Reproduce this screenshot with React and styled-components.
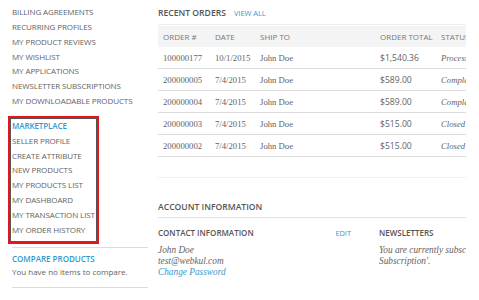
import React from "react";
import styled, { createGlobalStyle } from "styled-components";

const Global = createGlobalStyle`
  html, body { margin: 0; padding: 0; background: #fff; }
  body { width: 479px; height: 300px; overflow: hidden; }
`;

const SANS = `"Open Sans", "Liberation Sans", sans-serif`;
const SERIF = `"Liberation Serif", "DejaVu Serif", serif`;
const BLUE = "#3399cc";
const GRAY = "#636363";

const Page = styled.div`
  display: flex;
  align-items: flex-start;
`;

const Sidebar = styled.aside`
  width: 136px;
  margin-left: 12px;
  padding-top: 5px;
  flex: none;
`;

const NavList = styled.ul`
  list-style: none;
  margin: 0;
  padding: 0;
`;

const NavItem = styled.li`
  font-family: ${SANS};
  font-size: 8px;
  line-height: 14.85px;
  height: 14.85px;
  text-transform: uppercase;
  white-space: nowrap;
  letter-spacing: -0.1px;
  color: ${(p) => (p.$active ? BLUE : GRAY)};
  font-weight: ${(p) => (p.$active ? 600 : 400)};
`;

const Highlight = styled.div`
  margin: 9px 0 0 -2px;
  width: 84px;
  padding: 0 0 3px 1px;
  border: 1px solid #555;
  outline: 2px solid #e8141c;
`;

const Block = styled.div`
  border-top: 1px solid #dcdcdc;
  border-bottom: 1px solid #dcdcdc;
  margin-top: 5px;
  padding: 5px 0 8px;
`;

const BlockTitle = styled.div`
  font-family: ${SANS};
  font-size: 8px;
  font-weight: 600;
  color: ${BLUE};
  text-transform: uppercase;
  line-height: 12px;
`;

const BlockText = styled.div`
  font-family: ${SANS};
  font-size: 8px;
  color: ${GRAY};
  line-height: 14px;
`;

const Main = styled.main`
  margin-left: 10px;
  width: 308px;
  overflow: hidden;
  flex: none;
  padding-top: 7px;
`;

const SectionHead = styled.div`
  display: flex;
  align-items: baseline;
  gap: 8px;
  border-bottom: 1px solid #ededed;
  padding-bottom: 5px;
`;

const SectionTitle = styled.h2`
  margin: 0;
  font-family: ${SANS};
  font-size: 8.6px;
  font-weight: 600;
  color: #555;
  text-transform: uppercase;
  line-height: 12px;
  white-space: nowrap;
`;

const SmallLink = styled.a`
  font-family: ${SANS};
  font-size: 7.4px;
  color: ${BLUE};
  text-transform: uppercase;
  text-decoration: none;
`;

const Table = styled.table`
  margin-top: 1px;
  border-collapse: collapse;
  width: 330px;
  table-layout: fixed;
`;

const Th = styled.th`
  box-sizing: border-box;
  background: #f4f4f4;
  height: 21px;
  padding: 0 0 1px 5px;
  text-align: left;
  font-family: ${SANS};
  font-size: 8px;
  font-weight: 400;
  color: #777;
  text-transform: uppercase;
  white-space: nowrap;
  overflow: hidden;
  width: ${(p) => p.$w}px;
`;

const Td = styled.td`
  height: 21px;
  padding: 0 0 0 5px;
  border-bottom: 1px solid #dcdcdc;
  font-family: ${(p) => (p.$sans ? SANS : SERIF)};
  font-size: ${(p) => (p.$sans ? "8.6px" : "8.7px")};
  font-style: ${(p) => (p.$italic ? "italic" : "normal")};
  color: ${GRAY};
  white-space: nowrap;
  overflow: hidden;
`;

const Spacer = styled.div`
  height: 20px;
  border-bottom: 1px solid #f3f3f3;
`;

const Account = styled.section`
  margin-top: 23px;
`;

const AccountHead = styled.div`
  border-bottom: 1px solid #e3e3e3;
  padding-bottom: 4px;
`;

const Cols = styled.div`
  display: flex;
  margin-top: 9px;
`;

const Col = styled.div`
  width: ${(p) => p.$w}px;
  flex: none;
  overflow: hidden;
`;

const ColHead = styled.div`
  display: flex;
  justify-content: space-between;
  align-items: baseline;
  padding-right: 28px;
`;

const SubTitle = styled.h3`
  margin: 0;
  font-family: ${SANS};
  font-size: 8px;
  font-weight: 600;
  color: #555;
  text-transform: uppercase;
  line-height: 12px;
  white-space: nowrap;
`;

const Address = styled.div`
  margin-top: 6px;
  font-family: ${SERIF};
  font-style: italic;
  font-size: 9.3px;
  line-height: 11px;
  color: ${GRAY};
  white-space: nowrap;
`;

const ItalicLink = styled.a`
  display: block;
  color: ${BLUE};
  text-decoration: none;
`;

const topNav = [
  "Billing Agreements",
  "Recurring Profiles",
  "My Product Reviews",
  "My Wishlist",
  "My Applications",
  "Newsletter Subscriptions",
  "My Downloadable Products",
];

const marketNav = [
  "Seller Profile",
  "Create Attribute",
  "New Products",
  "My Products List",
  "My Dashboard",
  "My Transaction List",
  "My Order History",
];

const orders = [
  ["100000177", "10/1/2015", "John Doe", "$1,540.36", "Processing"],
  ["200000005", "7/4/2015", "John Doe", "$589.00", "Complete"],
  ["200000004", "7/4/2015", "John Doe", "$589.00", "Complete"],
  ["200000003", "7/4/2015", "John Doe", "$515.00", "Closed"],
  ["200000002", "7/4/2015", "John Doe", "$515.00", "Closed"],
];

export default function App() {
  return (
    <>
      <Global />
      <Page>
        <Sidebar>
          <NavList>
            {topNav.map((t) => (
              <NavItem key={t}>{t}</NavItem>
            ))}
          </NavList>
          <Highlight>
            <NavList>
              <NavItem $active>Marketplace</NavItem>
              {marketNav.map((t) => (
                <NavItem key={t}>{t}</NavItem>
              ))}
            </NavList>
          </Highlight>
          <Block>
            <BlockTitle>Compare Products</BlockTitle>
            <BlockText>You have no items to compare.</BlockText>
          </Block>
        </Sidebar>
        <Main>
          <SectionHead>
            <SectionTitle>Recent Orders</SectionTitle>
            <SmallLink href="#">View All</SmallLink>
          </SectionHead>
          <Table>
            <thead>
              <tr>
                <Th $w={52}>Order #</Th>
                <Th $w={45}>Date</Th>
                <Th $w={120}>Ship To</Th>
                <Th $w={61}>Order Total</Th>
                <Th $w={52}>Status</Th>
              </tr>
            </thead>
            <tbody>
              {orders.map((o) => (
                <tr key={o[0]}>
                  <Td>{o[0]}</Td>
                  <Td>{o[1]}</Td>
                  <Td>{o[2]}</Td>
                  <Td $sans>{o[3]}</Td>
                  <Td $italic>{o[4]}</Td>
                </tr>
              ))}
            </tbody>
          </Table>
          <Spacer />
          <Account>
            <AccountHead>
              <SectionTitle>Account Information</SectionTitle>
            </AccountHead>
            <Cols>
              <Col $w={221}>
                <ColHead>
                  <SubTitle>Contact Information</SubTitle>
                  <SmallLink href="#">Edit</SmallLink>
                </ColHead>
                <Address>
                  John Doe
                  <br />
                  test@webkul.com
                  <ItalicLink href="#">Change Password</ItalicLink>
                </Address>
              </Col>
              <Col $w={87}>
                <SubTitle>Newsletters</SubTitle>
                <Address>
                  You are currently subscribed to 'General
                  <br />
                  Subscription'.
                </Address>
              </Col>
            </Cols>
          </Account>
        </Main>
      </Page>
    </>
  );
}
